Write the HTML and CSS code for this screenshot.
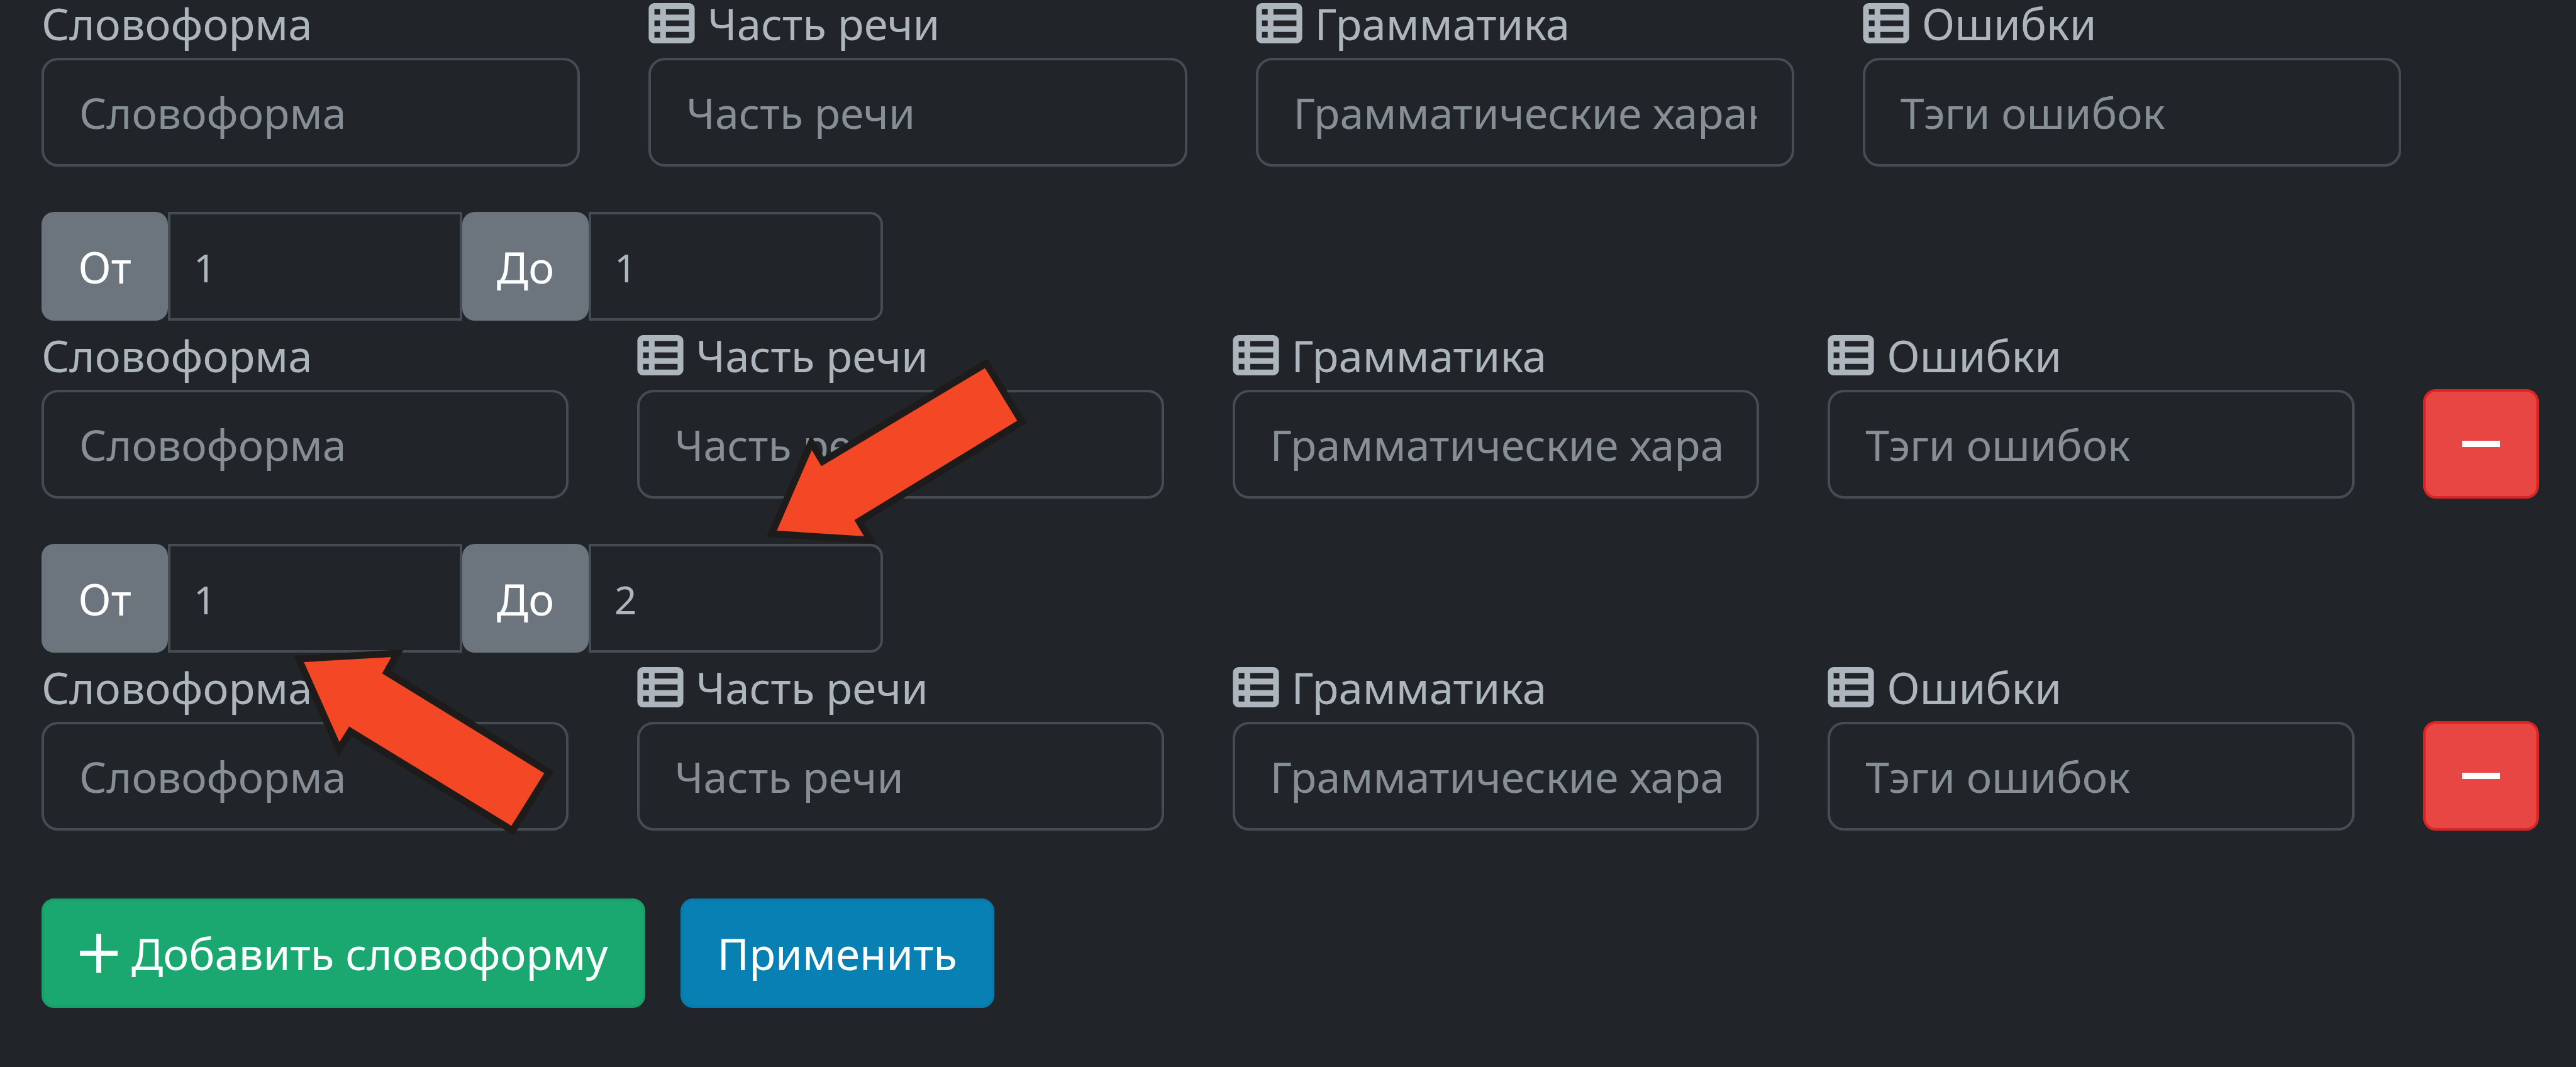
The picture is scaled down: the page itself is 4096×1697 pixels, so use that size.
FILE: index.html
```html
<!DOCTYPE html>
<html lang="ru">
<head>
<meta charset="utf-8">
<meta name="viewport" content="width=device-width, initial-scale=1">
<title>Поиск словоформ</title>
<link rel="stylesheet" href="styles.css">
</head>
<body>
<svg class="sprite" aria-hidden="true">
  <symbol id="table-list" viewBox="0 32 512 448"><path d="M0 96C0 60.700 28.700 32 64 32H448c35.300 0 64 28.700 64 64V416c0 35.300-28.700 64-64 64H64c-35.300 0-64-28.700-64-64V96zm64 0v64h64V96H64zm384 0H192v64H448V96zM64 224v64h64V224H64zm384 0H192v64H448V224zM64 352v64h64V352H64zm384 0H192v64H448V352z"/></symbol>
  <symbol id="plus" viewBox="0 0 64 64"><path d="M28 1h8v27h26v8H36v27h-8V36H2v-8h26z"/></symbol>
  <symbol id="minus" viewBox="0 0 64 64"><path d="M2 27h60v10H2z"/></symbol>
</svg>
<main class="page">
  <form class="search">
    <div class="fields fields-first">
      <div class="field">
        <label class="caption" for="form1">Словоформа</label>
        <input class="text" id="form1" type="text" placeholder="Словоформа">
      </div>
      <div class="field">
        <label class="caption" for="pos1"><svg class="icon"><use href="#table-list"/></svg>Часть речи</label>
        <input class="text" id="pos1" type="text" placeholder="Часть речи">
      </div>
      <div class="field">
        <label class="caption" for="gram1"><svg class="icon"><use href="#table-list"/></svg>Грамматика</label>
        <input class="text" id="gram1" type="text" placeholder="Грамматические характеристики">
      </div>
      <div class="field">
        <label class="caption" for="err1"><svg class="icon"><use href="#table-list"/></svg>Ошибки</label>
        <input class="text" id="err1" type="text" placeholder="Тэги ошибок">
      </div>
    </div>

    <div class="range">
      <label class="addon" for="from2">От</label>
      <input class="number" id="from2" type="number" value="1">
      <label class="addon" for="to2">До</label>
      <input class="number number-last" id="to2" type="number" value="1">
    </div>
    <div class="fields">
      <div class="field">
        <label class="caption" for="form2">Словоформа</label>
        <input class="text" id="form2" type="text" placeholder="Словоформа">
      </div>
      <div class="field">
        <label class="caption" for="pos2"><svg class="icon"><use href="#table-list"/></svg>Часть речи</label>
        <input class="text" id="pos2" type="text" placeholder="Часть речи">
      </div>
      <div class="field">
        <label class="caption" for="gram2"><svg class="icon"><use href="#table-list"/></svg>Грамматика</label>
        <input class="text" id="gram2" type="text" placeholder="Грамматические характеристики">
      </div>
      <div class="field">
        <label class="caption" for="err2"><svg class="icon"><use href="#table-list"/></svg>Ошибки</label>
        <input class="text" id="err2" type="text" placeholder="Тэги ошибок">
      </div>
      <button class="button remove" type="button" aria-label="Удалить"><svg class="sign"><use href="#minus"/></svg></button>
    </div>

    <div class="range">
      <label class="addon" for="from3">От</label>
      <input class="number" id="from3" type="number" value="1">
      <label class="addon" for="to3">До</label>
      <input class="number number-last" id="to3" type="number" value="2">
    </div>
    <div class="fields">
      <div class="field">
        <label class="caption" for="form3">Словоформа</label>
        <input class="text" id="form3" type="text" placeholder="Словоформа">
      </div>
      <div class="field">
        <label class="caption" for="pos3"><svg class="icon"><use href="#table-list"/></svg>Часть речи</label>
        <input class="text" id="pos3" type="text" placeholder="Часть речи">
      </div>
      <div class="field">
        <label class="caption" for="gram3"><svg class="icon"><use href="#table-list"/></svg>Грамматика</label>
        <input class="text" id="gram3" type="text" placeholder="Грамматические характеристики">
      </div>
      <div class="field">
        <label class="caption" for="err3"><svg class="icon"><use href="#table-list"/></svg>Ошибки</label>
        <input class="text" id="err3" type="text" placeholder="Тэги ошибок">
      </div>
      <button class="button remove" type="button" aria-label="Удалить"><svg class="sign"><use href="#minus"/></svg></button>
    </div>

    <div class="actions">
      <button class="button add" type="button"><svg class="sign"><use href="#plus"/></svg>Добавить словоформу</button>
      <button class="button apply" type="submit">Применить</button>
    </div>
  </form>

  <svg class="arrow arrow-to" viewBox="1210 560 440 320" aria-hidden="true"><path d="M1229 849L1292 704L1310 734L1570 578L1627 671L1368 829L1386 859z"/></svg>
  <svg class="arrow arrow-from" viewBox="460 1020 440 320" aria-hidden="true"><path d="M477 1048L634 1039L617 1069L875 1228L817 1321L559 1163L541 1192z"/></svg>
</main>
</body>
</html>
```
FILE: styles.css
```css
* {
  box-sizing: border-box;
}

body {
  margin: 0;
  background: #212529;
  color: #adb5bd;
  font-family: "Noto Sans", "Open Sans", sans-serif;
  font-size: 69px;
}

.sprite {
  position: absolute;
  width: 0;
  height: 0;
}

.page {
  position: relative;
  padding: 0 59px 0 66px;
}

.fields {
  display: grid;
  grid-template-columns: repeat(4, minmax(0, 1fr)) 184px;
  column-gap: 109px;
  align-items: end;
}

.fields-first {
  grid-template-columns: repeat(4, minmax(0, 1fr));
  padding-right: 219px;
}

.caption {
  display: flex;
  align-items: center;
  gap: 20px;
  height: 110px;
  line-height: 110px;
  white-space: nowrap;
}

.fields-first .caption {
  height: 92px;
  padding-bottom: 18px;
  line-height: 74px;
}

.icon {
  width: 74px;
  height: 64px;
  fill: currentColor;
}

.text,
.number {
  display: block;
  width: 100%;
  height: 173px;
  margin: 0;
  border: 4px solid #464c53;
  background: transparent;
  color: #adb5bd;
  font: inherit;
  outline: 0;
}

.text {
  padding: 0 56px;
  border-radius: 26px;
  font-size: 68px;
}

.text::placeholder {
  color: #868e96;
  opacity: 1;
}

.range {
  display: flex;
  width: 1338px;
  max-width: 100%;
  margin-top: 72px;
}

.addon {
  flex: 0 0 201px;
  height: 173px;
  border-radius: 20px;
  background: #6c757d;
  color: #fff;
  line-height: 174px;
  text-align: center;
}

.number {
  flex: 1;
  min-width: 0;
  padding: 2px 37px 0;
  font-size: 62px;
  appearance: textfield;
}

.number::-webkit-inner-spin-button {
  appearance: none;
  margin: 0;
}

.number-last {
  border-radius: 0 20px 20px 0;
}

.actions {
  display: flex;
  gap: 56px;
  margin-top: 108px;
}

.button {
  display: flex;
  align-items: center;
  justify-content: center;
  gap: 20px;
  height: 174px;
  padding: 0 55px;
  border: 4px solid;
  border-radius: 20px;
  color: #fff;
  font: inherit;
  white-space: nowrap;
}

.sign {
  width: 64px;
  height: 64px;
  fill: currentColor;
}

.remove {
  background: #e84643;
  border-color: #dd2424;
}

.add {
  background: #1aa870;
  border-color: #18a06b;
}

.apply {
  background: #0880b3;
  border-color: #087aab;
}

.arrow {
  position: absolute;
  width: 440px;
  height: 320px;
  fill: #f34726;
  stroke: #1d1c1a;
  stroke-width: 11;
  stroke-miterlimit: 10;
}

.arrow-to {
  left: 1208px;
  top: 560px;
}

.arrow-from {
  left: 458px;
  top: 1020px;
}
```
